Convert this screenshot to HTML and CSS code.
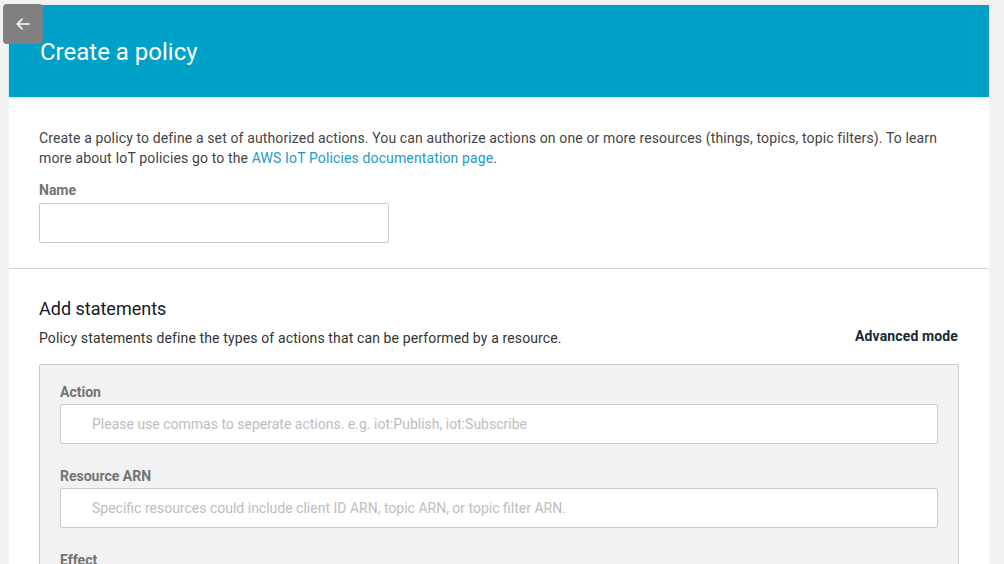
FILE: index.html
```html
<!DOCTYPE html>
<html lang="en">
<head>
<meta charset="utf-8">
<title>Create a policy</title>
<link rel="stylesheet" href="styles.css">
</head>
<body>
<div class="page">
  <button class="back" aria-label="Back">
    <svg width="14" height="12" viewBox="0 0 14 12" fill="none" stroke="#fff" stroke-width="1.6" stroke-linecap="round" stroke-linejoin="round"><path d="M13 6H1.5M6 1.2L1.2 6 6 10.8"/></svg>
  </button>
  <div class="card">
    <header class="header">
      <h1 class="title">Create a policy</h1>
    </header>
    <section class="intro">
      <p class="desc">Create a policy to define a set of authorized actions. You can authorize actions on one or more resources (things, topics, topic filters). To learn more about IoT policies go to the <a class="link" href="#">AWS IoT Policies documentation page</a>.</p>
      <label class="label">Name</label>
      <input class="input name-input" type="text">
    </section>
    <section class="statements">
      <h2 class="section-title">Add statements</h2>
      <div class="sub-row">
        <p class="sub">Policy statements define the types of actions that can be performed by a resource.</p>
        <a class="advanced" href="#">Advanced mode</a>
      </div>
      <div class="statement">
        <label class="label">Action</label>
        <input class="input wide" type="text" placeholder="Please use commas to seperate actions. e.g. iot:Publish, iot:Subscribe">
        <label class="label">Resource ARN</label>
        <input class="input wide" type="text" placeholder="Specific resources could include client ID ARN, topic ARN, or topic filter ARN.">
        <label class="label">Effect</label>
      </div>
    </section>
  </div>
</div>
</body>
</html>
```
FILE: styles.css
```css
* { box-sizing: border-box; }
html, body { margin: 0; padding: 0; }
body {
  background: #f2f2f2;
  font-family: Roboto, "Open Sans", sans-serif;
  font-size: 14px;
  color: #444;
  overflow: hidden;
  height: 564px;
}
.page {
  padding: 5px 15px 0 9px;
  position: relative;
}
.back {
  position: absolute;
  left: 3px;
  top: 4px;
  width: 40px;
  height: 40px;
  border: 0;
  border-radius: 4px;
  background: #808080;
  display: flex;
  align-items: center;
  justify-content: center;
  padding: 0;
  z-index: 2;
}
.card {
  background: #fff;
}
.header {
  background: #00a1c9;
  height: 92px;
  display: flex;
  align-items: center;
  padding-left: 31px;
  box-shadow: 0 1px 2px rgba(0,0,0,0.15);
  position: relative;
}
.title {
  margin: 0;
  font-size: 24px;
  font-weight: 400;
  color: #fff;
  line-height: 30px;
  padding-top: 2px;
}
.intro {
  padding: 31px 30px 25px;
  border-bottom: 1px solid #d5d5d5;
}
.desc {
  margin: 0 0 12px;
  line-height: 20px;
  letter-spacing: 0.13px;
}
.link { color: #1a9cc8; text-decoration: none; }
.label {
  display: block;
  font-size: 14px;
  font-weight: 700;
  color: #737373;
  line-height: 20px;
  margin-bottom: 2px;
}
.input {
  display: block;
  height: 40px;
  border: 1px solid #cacaca;
  border-radius: 2px;
  background: #fff;
  font-family: inherit;
  font-size: 14px;
  color: #444;
  padding: 0 12px 0 31px;
  outline: none;
}
.name-input { width: 350px; padding-left: 12px; margin-top: 3px; }
.input::placeholder { color: #bdbdbd; }
.statements {
  padding: 28px 30px 0;
}
.section-title {
  margin: 0 0 7px;
  font-size: 18px;
  font-weight: 400;
  color: #16191f;
  line-height: 24px;
}
.sub-row {
  display: flex;
  justify-content: space-between;
  align-items: center;
  margin-bottom: 16px;
  padding-right: 1px;
}
.sub { margin: 0; line-height: 20px; color: #333; letter-spacing: 0.13px; }
.advanced {
  font-weight: 700;
  color: #152939;
  text-decoration: none;
  line-height: 20px;
  letter-spacing: 0.13px;
  position: relative;
  top: -2px;
}
.statement {
  background: #f2f2f2;
  border: 1px solid #cacaca;
  border-radius: 2px;
  padding: 17px 20px 20px;
  height: 300px;
}
.statement .input { margin-bottom: 22px; }
.wide { width: 100%; }
```
